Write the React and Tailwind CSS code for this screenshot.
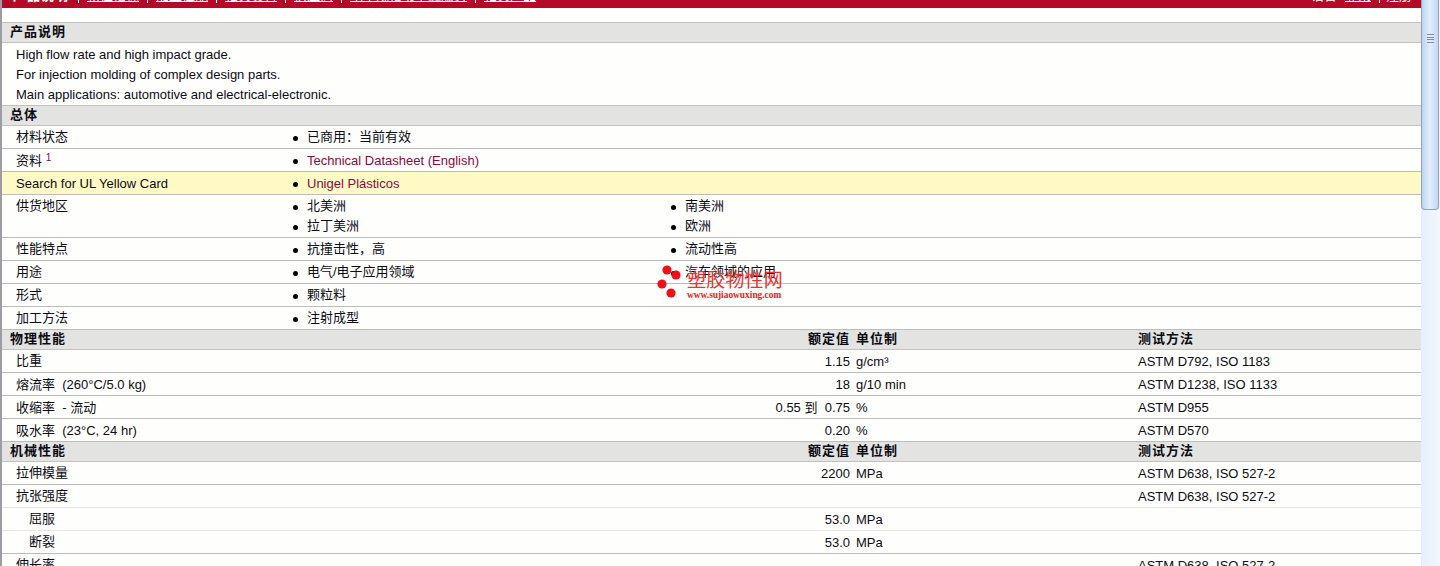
import React from 'react';

const navLinks = ['物性指标', '加工性能', '相关资料', '供应商', '电子规格书下载服务', '相关产品'];

const Bullet = ({ children, link }) => (
  <div className="flex h-5 items-center">
    <span className={`ml-[2px] h-[5px] w-[5px] rounded-full bg-black ${link ? '' : 'translate-y-px'}`} />
    <span className={`ml-[9px] ${link ? 'text-[#8a0a3c]' : ''}`}>{children}</span>
  </div>
);

const Section = ({ title, top, columns }) => (
  <div className={`flex items-center border-b border-[#c2c2be] bg-[#e3e3e1] pb-[2px] pl-2 font-bold tracking-[1px] ${top ? 'h-[21px] border-t' : 'h-5'}`}>
    <span className="w-[798px]">{title}</span>
    {columns && (
      <>
        <span className="w-[42px] whitespace-nowrap text-right">额定值</span>
        <span className="ml-[6px] w-[282px]">单位制</span>
        <span>测试方法</span>
      </>
    )}
  </div>
);

// label + one or two columns of bulleted values
const InfoRow = ({ label, left, right, link, yellow }) => (
  <div className={`flex border-b border-[#bcbcbc] pl-[14px] ${link ? 'pt-[2px]' : 'py-px'} ${yellow ? 'bg-[#fff9c6]' : ''}`}>
    <div className="w-[275px] leading-5">{label}</div>
    <div className="w-[378px]">
      {left.map((item) => (
        <Bullet key={item} link={link}>{item}</Bullet>
      ))}
    </div>
    <div>
      {(right || []).map((item) => (
        <Bullet key={item}>{item}</Bullet>
      ))}
    </div>
  </div>
);

const DataRow = ({ label, value, unit, test, indent, light, latin }) => (
  <div className={`flex h-[23px] items-center border-b ${light ? 'border-[#e6e6e6]' : 'border-[#bcbcbc]'}`}>
    <div className="flex w-[848px] items-center justify-between">
      <span className={`whitespace-pre ${indent ? 'pl-[27px]' : 'pl-[14px]'} ${latin ? 'translate-y-px' : ''}`}>{label}</span>
      <span className="translate-y-px whitespace-pre">{value}</span>
    </div>
    <span className="ml-[6px] w-[282px] translate-y-px">{unit}</span>
    <span className="translate-y-px">{test}</span>
  </div>
);

const Watermark = () => (
  <div className="absolute left-[653px] top-[263px] flex">
    <svg width="32" height="36" viewBox="0 0 32 36" className="shrink-0">
      <circle cx="12" cy="7" r="4.6" fill="#f01018" />
      <circle cx="21" cy="12" r="4.6" fill="#f01018" />
      <circle cx="7" cy="21" r="4.6" fill="#f01018" />
      <circle cx="16" cy="30" r="4.6" fill="#f01018" />
    </svg>
    <div className="flex flex-col text-[#f23030]">
      <span className="mt-[5px] whitespace-nowrap text-[19px] leading-[22px] tracking-[0.2px] font-normal font-['Noto_Sans_CJK_SC',sans-serif]">塑胶物性网</span>
      <span className="-mt-[1px] whitespace-nowrap text-[9.4px] leading-[12px] font-bold text-[#f01828] font-['Liberation_Serif',serif]">www.sujiaowuxing.com</span>
    </div>
  </div>
);

const Scrollbar = () => (
  <div className="w-[19px] shrink-0 bg-gradient-to-r from-[#e6effb] to-[#f3f7fd]">
    <div className="mr-px flex h-[210px] flex-col items-center rounded-b-sm border border-t-0 border-[#8ea3c4] bg-gradient-to-r from-[#bcd3f3] via-[#e3eefc] to-[#c3d8f5] pt-[34px]">
      <div className="flex h-[9px] w-[7px] flex-col justify-between">
        <span className="h-px bg-[#7f8ea5]" />
        <span className="h-px bg-[#7f8ea5]" />
        <span className="h-px bg-[#7f8ea5]" />
        <span className="h-px bg-[#7f8ea5]" />
      </div>
    </div>
  </div>
);

export default function App() {
  return (
    <div className="flex h-[566px] w-[1440px] overflow-hidden bg-[#fefefc] text-[13px] text-[#0c0c14] font-['Liberation_Sans','Noto_Sans_CJK_SC',sans-serif]">
      <main className="relative flex-1 overflow-hidden border-l-2 border-[#9c9ca4]">
        {/* top bar, only the bottom of it is left in view */}
        <div className="flex h-2 justify-between overflow-hidden bg-[#b40a28] pl-[11px] pr-[9px] text-white">
          <div className="-mt-[12px] flex h-4 items-center">
            <span className="mr-px font-bold tracking-[1px]">产品说明</span>
            {navLinks.map((link) => (
              <React.Fragment key={link}>
                <span className="mx-2 h-[15px] w-px self-start bg-white" />
                <span className="underline">{link}</span>
              </React.Fragment>
            ))}
          </div>
          <div className="-mt-[12px] flex h-4 items-center">
            <span className="mr-2">语言</span>
            <span className="underline">登录</span>
            <span className="ml-2 mr-[6px] h-[15px] w-px self-start bg-white" />
            <span>注册</span>
          </div>
        </div>

        <div className="h-[14px]" />
        <Section title="产品说明" top />
        <div className="pl-[14px] pt-[2px] leading-5">
          <div>High flow rate and high impact grade.</div>
          <div>For injection molding of complex design parts.</div>
          <div>Main applications: automotive and electrical-electronic.</div>
        </div>
        <Section title="总体" top />

        <InfoRow label="材料状态" left={['已商用：当前有效']} />
        <InfoRow
          label={<>资料 <sup className="top-[-4px] text-[10px] text-[#7a0a60]">1</sup></>}
          left={['Technical Datasheet (English)']}
          link
        />
        <InfoRow label="Search for UL Yellow Card" left={['Unigel Plásticos']} link yellow />
        <InfoRow label="供货地区" left={['北美洲', '拉丁美洲']} right={['南美洲', '欧洲']} />
        <InfoRow label="性能特点" left={['抗撞击性，高']} right={['流动性高']} />
        <InfoRow label="用途" left={['电气/电子应用领域']} right={['汽车领域的应用']} />
        <InfoRow label="形式" left={['颗粒料']} />
        <InfoRow label="加工方法" left={['注射成型']} />

        <Section title="物理性能" columns />
        <DataRow label="比重" value="1.15" unit="g/cm³" test="ASTM D792, ISO 1183" />
        <DataRow label="熔流率  (260°C/5.0 kg)" value="18" unit="g/10 min" test="ASTM D1238, ISO 1133" latin />
        <DataRow label="收缩率  - 流动" value="0.55 到  0.75" unit="%" test="ASTM D955" latin />
        <DataRow label="吸水率  (23°C, 24 hr)" value="0.20" unit="%" test="ASTM D570" latin />

        <Section title="机械性能" columns />
        <DataRow label="拉伸模量" value="2200" unit="MPa" test="ASTM D638, ISO 527-2" />
        <DataRow label="抗张强度" test="ASTM D638, ISO 527-2" light />
        <DataRow label="屈服" value="53.0" unit="MPa" indent light />
        <DataRow label="断裂" value="53.0" unit="MPa" indent />
        <DataRow label="伸长率" test="ASTM D638, ISO 527-2" />

        <Watermark />
      </main>
      <Scrollbar />
    </div>
  );
}
